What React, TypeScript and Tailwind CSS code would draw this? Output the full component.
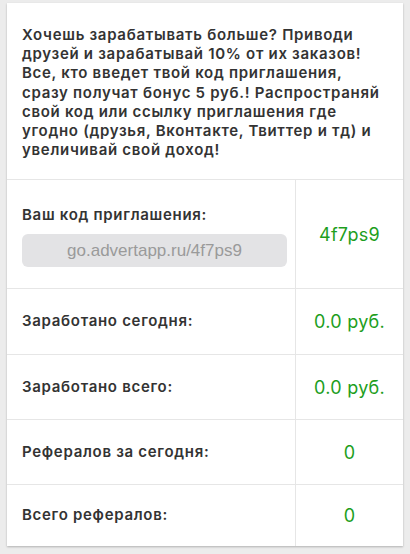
const rows = [
  { label: 'Заработано сегодня:', value: '0.0 руб.', h: 'h-[66px]' },
  { label: 'Заработано всего:', value: '0.0 руб.', h: 'h-[65px]' },
  { label: 'Рефералов за сегодня:', value: '0', h: 'h-[65px]' },
  { label: 'Всего рефералов:', value: '0', h: 'h-[62px]' },
];

export default function App() {
  return (
    <div className="min-h-[554px] bg-[#ececec] px-[7px] pt-[3px] font-['Inter',Helvetica,Arial,sans-serif]">
      <div className="bg-white shadow-[0_1px_2px_rgba(0,0,0,0.25)]">
        <div className="h-[176px] px-[15px] pt-[22px]">
          <p className="text-[15px] leading-[19.2px] font-semibold tracking-[0.7px] text-[#333]">
            Хочешь зарабатывать больше? Приводи друзей и зарабатывай 10% от их заказов! Все, кто введет твой код приглашения, сразу получат бонус 5 руб.! Распространяй свой код или ссылку приглашения где угодно (друзья, Вконтакте, Твиттер и тд) и увеличивай свой доход!
          </p>
        </div>

        <div className="grid grid-cols-[289px_1fr] border-t border-[#e6e6e6]">
          <div className="h-[108px] border-r border-[#e6e6e6] px-[15px] flex flex-col justify-center">
            <div className="text-[15px] font-semibold tracking-[0.7px] text-[#333] mt-[3px]">Ваш код приглашения:</div>
            <div className="mt-[8px] h-[33px] w-[265px] rounded-[6px] bg-[#e3e3e5] flex items-center justify-center text-[17px] text-[#9a9a9a] font-['Liberation_Sans',Arial,sans-serif]">
              go.advertapp.ru/4f7ps9
            </div>
          </div>
          <div className="h-[108px] flex items-center justify-center text-[18px] tracking-[0.3px] text-[#1d9e1d]">4f7ps9</div>

          {rows.map((r) => (
            <div key={r.label} className="contents">
              <div className={`${r.h} border-t border-r border-[#e6e6e6] px-[15px] flex items-center text-[15px] font-semibold tracking-[0.7px] text-[#333]`}>
                {r.label}
              </div>
              <div className={`${r.h} border-t border-[#e6e6e6] flex items-center justify-center text-[18px] tracking-[0.3px] text-[#1d9e1d]`}>
                {r.value}
              </div>
            </div>
          ))}
        </div>
      </div>
    </div>
  );
}
